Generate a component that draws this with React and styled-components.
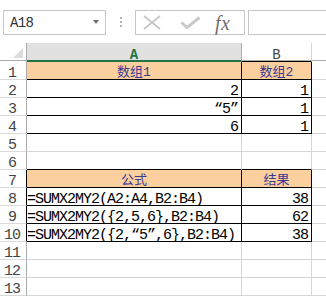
import React from "react"
import styled, { createGlobalStyle, css } from "styled-components"

const GRID = "#d4d4d4"
const HEAD_LINE = "#ababab"
const INK = "#000"
const PEACH = "#fccf9e"

const GlobalStyle = createGlobalStyle`
  html, body {
    margin: 0;
    padding: 0;
    background: #fff;
  }
  body {
    font-family: "Liberation Mono", "Noto Sans CJK SC", monospace;
  }
`

const rows = [
  { n: 1, a: "数组1", b: "数组2", head: true, box: true },
  { n: 2, a: "2", b: "1", box: true },
  { n: 3, a: "“5”", b: "1", box: true },
  { n: 4, a: "6", b: "1", box: true },
  { n: 5 },
  { n: 6, inkBelow: true },
  { n: 7, a: "公式", b: "结果", head: true, box: true, edge: true },
  { n: 8, a: "=SUMX2MY2(A2:A4,B2:B4)", b: "38", box: true, edge: true, left: true },
  { n: 9, a: "=SUMX2MY2({2,5,6},B2:B4)", b: "62", box: true, edge: true, left: true },
  { n: 10, a: "=SUMX2MY2({2,“5”,6},B2:B4)", b: "38", box: true, edge: true, left: true },
  { n: 11 },
  { n: 12 },
  { n: 13 },
]

const App = () => {
  return (
    <>
      <GlobalStyle />
      <Sheet>
        <FormulaBar>
          <NameBox>
            <span>A18</span>
            <DropArrow />
          </NameBox>
          <Grip>
            <Dot />
            <Dot />
            <Dot />
          </Grip>
          <FxBox>
            <svg width="18" height="15" viewBox="0 0 18 15">
              <path d="M1 1 L17 14 M17 1 L1 14" stroke="#c6c6c6" strokeWidth="1.7" fill="none" />
            </svg>
            <svg width="21" height="13" viewBox="0 0 21 13" style={{ marginLeft: 19 }}>
              <path d="M1.5 6.5 L7 11.5 L19.5 1.5" stroke="#c9c9c9" strokeWidth="3" fill="none" />
            </svg>
            <FxLabel>fx</FxLabel>
          </FxBox>
          <InputBox />
        </FormulaBar>

        <Grid>
          <Corner>
            <CornerMark />
          </Corner>
          <ColHead $variant="active">A</ColHead>
          <ColHead $variant="plain">B</ColHead>
          <ColHead $variant="rest" />

          {rows.map((r) => {
            const boxed = !!r.box
            const below = boxed || r.inkBelow
            return (
              <React.Fragment key={r.n}>
                <RowNum $edge={r.edge}>{r.n}</RowNum>
                <Cell
                  $boxed={boxed}
                  $inkBelow={below}
                  $head={r.head}
                  $align={r.head ? "center" : r.left ? "left" : "right"}
                >
                  {r.a}
                </Cell>
                <Cell
                  $boxed={boxed}
                  $inkBelow={below}
                  $head={r.head}
                  $align={r.head ? "center" : "right"}
                >
                  {r.b}
                </Cell>
                <Filler />
              </React.Fragment>
            )
          })}
        </Grid>
      </Sheet>
    </>
  )
}

export default App

const Sheet = styled.div`
  width: 326px;
  height: 296px;
  overflow: hidden;
  background: #fff;
`

const FormulaBar = styled.div`
  box-sizing: border-box;
  height: 43px;
  display: flex;
  align-items: flex-start;
  padding: 10px 0 0 3px;
`

const NameBox = styled.div`
  box-sizing: border-box;
  width: 103px;
  height: 25px;
  border: 1px solid #c6c6c6;
  display: flex;
  align-items: center;
  justify-content: space-between;
  padding: 0 6px 0 6px;
  font-size: 14px;
  letter-spacing: -0.6px;
  color: #333;
`

const DropArrow = styled.span`
  width: 0;
  height: 0;
  border-left: 3.5px solid transparent;
  border-right: 3.5px solid transparent;
  border-top: 4px solid #6d6d6d;
  margin-top: -2px;
`

const Grip = styled.div`
  width: 29px;
  display: flex;
  flex-direction: column;
  align-items: center;
  gap: 2px;
  padding-top: 7px;
`

const Dot = styled.span`
  width: 2px;
  height: 2px;
  background: #b4b4b4;
`

const FxBox = styled.div`
  box-sizing: border-box;
  width: 110px;
  height: 25px;
  border: 1px solid #c6c6c6;
  display: flex;
  align-items: center;
  padding-left: 7px;
`

const FxLabel = styled.span`
  margin-left: 14px;
  font-family: "Liberation Serif", serif;
  font-style: italic;
  font-size: 20px;
  line-height: 20px;
  color: #6f6f6f;
  letter-spacing: 0.5px;
`

const InputBox = styled.div`
  box-sizing: border-box;
  flex: 1;
  margin-left: 3px;
  height: 25px;
  border: 1px solid #c6c6c6;
  border-right: none;
`

const Grid = styled.div`
  display: grid;
  grid-template-columns: 27px 215px 70px 1fr;
  grid-template-rows: 19px;
  grid-auto-rows: 18px;
`

const Corner = styled.div`
  box-sizing: border-box;
  border-right: 1px solid ${HEAD_LINE};
  box-shadow: inset 0 -1px 0 #fff, inset 0 -2px 0 ${HEAD_LINE};
  display: flex;
  align-items: flex-end;
  justify-content: flex-end;
  padding: 0 3px 4px 0;
`

const CornerMark = styled.span`
  width: 0;
  height: 0;
  border-left: 10px solid transparent;
  border-bottom: 10px solid #dcdcdc;
`

const ColHead = styled.div`
  box-sizing: border-box;
  display: flex;
  justify-content: center;
  align-items: flex-start;
  padding-top: 5px;
  font-size: 14px;
  line-height: 14px;
  color: #444;

  ${(p) =>
    p.$variant === "active" &&
    css`
      background: #e1e1e1;
      color: #217346;
      font-weight: bold;
      border-right: 1px solid ${HEAD_LINE};
      border-bottom: 2px solid #217346;
    `}

  ${(p) =>
    p.$variant === "plain" &&
    css`
      border-right: 1px solid ${GRID};
      border-bottom: 1px solid ${INK};
      box-shadow: inset 0 -1px 0 ${HEAD_LINE};
    `}

  ${(p) =>
    p.$variant === "rest" &&
    css`
      box-shadow: inset 0 -1px 0 #fff, inset 0 -2px 0 ${HEAD_LINE};
    `}
`

const RowNum = styled.div`
  box-sizing: border-box;
  display: flex;
  align-items: flex-end;
  justify-content: center;
  padding-right: 2px;
  border-right: 1px solid ${(p) => (p.$edge ? INK : HEAD_LINE)};
  border-bottom: 1px solid #dadada;
  color: #444;
  font-size: 15px;
  letter-spacing: -1px;
  line-height: 11px;
`

const Cell = styled.div`
  box-sizing: border-box;
  display: flex;
  align-items: flex-end;
  justify-content: ${(p) =>
    p.$align === "center" ? "center" : p.$align === "left" ? "flex-start" : "flex-end"};
  padding-right: ${(p) => (p.$align === "right" ? "3px" : "0")};
  border-right: 1px solid ${(p) => (p.$boxed ? INK : GRID)};
  border-bottom: 1px solid ${(p) => (p.$inkBelow ? INK : GRID)};
  background: ${(p) => (p.$head ? PEACH : "#fff")};
  color: ${(p) => (p.$head ? "#3a3a92" : "#000")};
  font-size: ${(p) => (p.$head ? "13px" : "15px")};
  letter-spacing: ${(p) => (p.$head ? "0" : "-1px")};
  line-height: ${(p) => (p.$head ? "13px" : "11px")};
  white-space: nowrap;
`

const Filler = styled.div`
  box-sizing: border-box;
  border-bottom: 1px solid ${GRID};
`
